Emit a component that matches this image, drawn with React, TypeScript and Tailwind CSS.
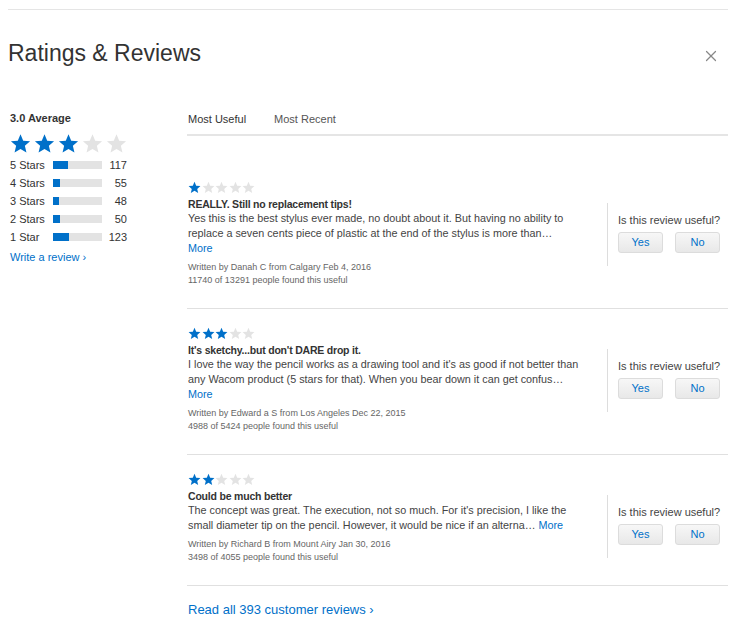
import { X } from "lucide-react"

interface Review {
  stars: number
  title: string
  lines: string[]
  moreInline: boolean
  author: string
  useful: string
}

const reviews: Review[] = [
  {
    stars: 1,
    title: "REALLY. Still no replacement tips!",
    lines: [
      "Yes this is the best stylus ever made, no doubt about it. But having no ability to",
      "replace a seven cents piece of plastic at the end of the stylus is more than…",
    ],
    moreInline: false,
    author: "Written by Danah C from Calgary Feb 4, 2016",
    useful: "11740 of 13291 people found this useful",
  },
  {
    stars: 3,
    title: "It's sketchy...but don't DARE drop it.",
    lines: [
      "I love the way the pencil works as a drawing tool and it's as good if not better than",
      "any Wacom product (5 stars for that). When you bear down it can get confus…",
    ],
    moreInline: false,
    author: "Written by Edward a S from Los Angeles Dec 22, 2015",
    useful: "4988 of 5424 people found this useful",
  },
  {
    stars: 2,
    title: "Could be much better",
    lines: [
      "The concept was great. The execution, not so much. For it's precision, I like the",
      "small diameter tip on the pencil. However, it would be nice if an alterna…",
    ],
    moreInline: true,
    author: "Written by Richard B from Mount Airy Jan 30, 2016",
    useful: "3498 of 4055 people found this useful",
  },
]

const bars = [
  { label: "5 Stars", fill: 15, count: 117 },
  { label: "4 Stars", fill: 7, count: 55 },
  { label: "3 Stars", fill: 6, count: 48 },
  { label: "2 Stars", fill: 7, count: 50 },
  { label: "1 Star", fill: 16, count: 123 },
]

function Star({ size, on }: { size: number; on: boolean }) {
  return (
    <svg width={size} height={size} viewBox="0 0 24 24" className={on ? "text-[#0070c9]" : "text-[#e3e3e3]"}>
      <path
        fill="currentColor"
        d="M12 1.5l3.09 7.26 7.86.68-5.96 5.17 1.79 7.69L12 18.2l-6.78 4.1 1.79-7.69-5.96-5.17 7.86-.68z"
      />
    </svg>
  )
}

function Stars({ count, size, gap }: { count: number; size: number; gap: string }) {
  return (
    <div className={`flex ${gap}`}>
      {[0, 1, 2, 3, 4].map((i) => (
        <Star key={i} size={size} on={i < count} />
      ))}
    </div>
  )
}

export default function App() {
  return (
    <main className="min-h-screen bg-white px-2 pt-[9px] text-[#333] font-['Liberation_Sans',Arial,sans-serif]">
      <div className="w-[720px] border-t border-[#e5e5e5]">
        <header className="mt-[29px] flex items-center justify-between">
          <h1 className="text-[23px] leading-[28px] text-[#333]">Ratings &amp; Reviews</h1>
          <button type="button" className="mr-[8px] mt-[6px] text-[#888]">
            <X size={18} strokeWidth={1.6} />
          </button>
        </header>

        <div className="mt-[44px] flex">
          <aside className="w-[179px] shrink-0 pl-[2px]">
            <p className="text-[11px] leading-[14px] font-bold">3.0 Average</p>
            <div className="mt-[8px]">
              <Stars count={3} size={21} gap="gap-[3px]" />
            </div>
            <div className="mt-[2px] flex flex-col">
              {bars.map((b) => (
                <div key={b.label} className="flex h-[18px] items-center text-[11px]">
                  <span className="w-[43px]">{b.label}</span>
                  <div className="h-[8px] w-[49px] bg-[#e3e3e3]">
                    <div className="h-full bg-[#0070c9]" style={{ width: b.fill }} />
                  </div>
                  <span className="w-[25px] text-right">{b.count}</span>
                </div>
              ))}
            </div>
            <a href="#" className="mt-[4px] block text-[11px] leading-[14px] text-[#0070c9]">
              Write a review ›
            </a>
          </aside>

          <section className="flex-1">
            <nav className="flex gap-[28px] border-b-2 border-[#e5e5e5] pb-[8px] pt-[1px] pl-[1px] text-[11px] leading-[14px] text-[#333]">
              <span>Most Useful</span>
              <span className="text-[#555]">Most Recent</span>
            </nav>

            <div className="pt-[27px]">
              {reviews.map((r) => (
                <article key={r.author} className="flex border-b border-[#e0e0e0] pt-[18px] pb-[21px]">
                  <div className="flex-1 pl-[1px]">
                    <Stars count={r.stars} size={13} gap="gap-[0.5px]" />
                    <h3 className="mt-[3px] text-[10.5px] leading-[14px] font-bold tracking-[-0.2px] text-[#333]">{r.title}</h3>
                    <p className="text-[10.8px] leading-[15px] text-[#444]">
                      {r.lines.map((l, i) => (
                        <span key={i} className="block whitespace-nowrap">
                          {l}
                          {r.moreInline && i === r.lines.length - 1 && (
                            <a href="#" className="text-[#0070c9]"> More</a>
                          )}
                        </span>
                      ))}
                      {!r.moreInline && (
                        <a href="#" className="block text-[#0070c9]">More</a>
                      )}
                    </p>
                    <p className="mt-[5px] text-[9px] leading-[13px] text-[#666]">{r.author}</p>
                    <p className="text-[9px] leading-[13px] text-[#666]">{r.useful}</p>
                  </div>
                  <div className="ml-[10px] mt-[22px] h-[63px] w-[121px] border-l border-[#ddd] pl-[10px] pt-[10px]">
                    <p className="text-[11px] leading-[14px] text-[#444]">Is this review useful?</p>
                    <div className="mt-[5px] flex gap-[12px]">
                      <button type="button" className="h-[21px] w-[45px] rounded-[3px] border border-[#dcdcdc] bg-gradient-to-b from-[#f7f7f7] to-[#e8e8e8] text-[11px] text-[#0070c9]">Yes</button>
                      <button type="button" className="h-[21px] w-[45px] rounded-[3px] border border-[#dcdcdc] bg-gradient-to-b from-[#f7f7f7] to-[#e8e8e8] text-[11px] text-[#0070c9]">No</button>
                    </div>
                  </div>
                </article>
              ))}
            </div>

            <a href="#" className="mt-[16px] block pl-[1px] text-[13px] leading-[16px] text-[#0070c9]">
              Read all 393 customer reviews ›
            </a>
          </section>
        </div>
      </div>
    </main>
  )
}
